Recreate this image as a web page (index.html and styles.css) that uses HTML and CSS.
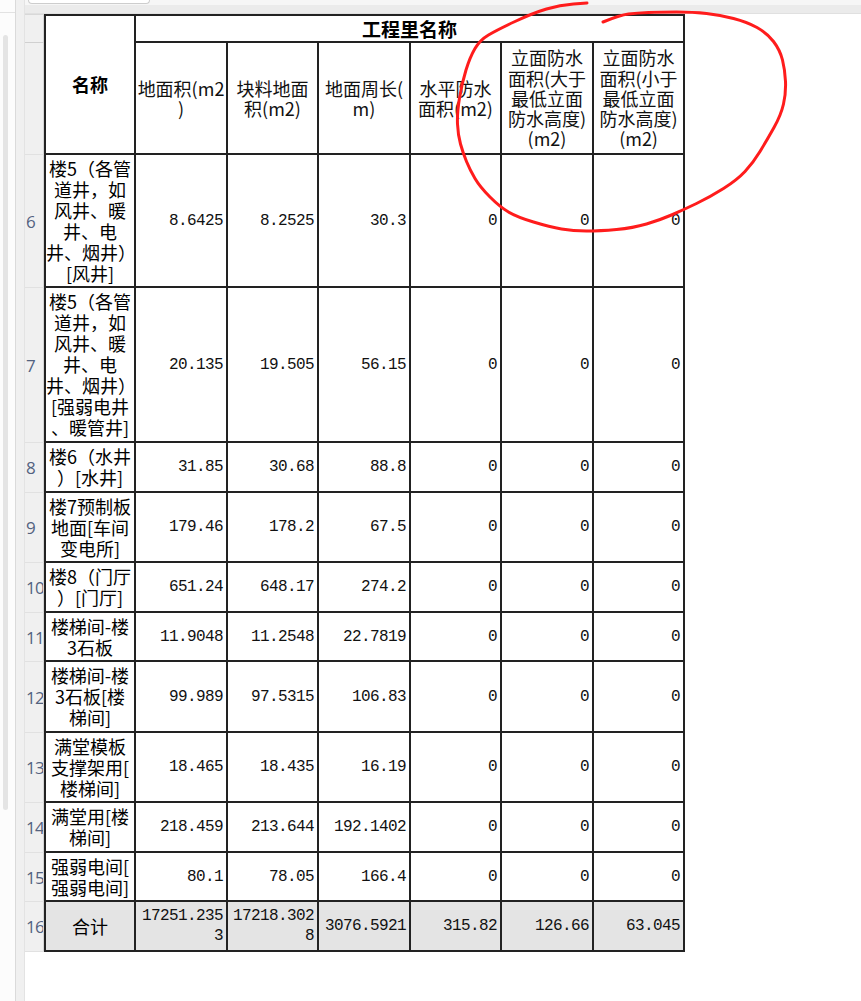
FILE: index.html
```html
<!DOCTYPE html>
<html lang="zh-CN">
<head>
<meta charset="utf-8">
<title>工程量表</title>
<link rel="stylesheet" href="styles.css">
</head>
<body>
<div class="app">
  <div class="side">
    <div class="side-top"></div>
    <div class="thumb"></div>
  </div>
  <div class="gutter"></div>
  <div class="main">
    <div class="topbar"><div class="searchbox"></div></div>
    <table class="grid">
      <colgroup>
        <col class="c-rn"><col class="c-92"><col class="c-92"><col class="c-91"><col class="c-92"><col class="c-91"><col class="c-92"><col class="c-91">
      </colgroup>
      <tr class="hd1">
        <td class="rn top"></td>
        <td class="nm top title" rowspan="2">名称</td>
        <td class="v top title group" colspan="6">工程里名称</td>
      </tr>
      <tr class="hd2">
        <td class="rn"></td>
        <td class="v hd">地面积(m2<br>)</td>
        <td class="v hd">块料地面<br>积(m2)</td>
        <td class="v hd">地面周长(<br>m)</td>
        <td class="v hd">水平防水<br>面积(m2)</td>
        <td class="v hd">立面防水<br>面积(大于<br>最低立面<br>防水高度)<br>(m2)</td>
        <td class="v hd">立面防水<br>面积(小于<br>最低立面<br>防水高度)<br>(m2)</td>
      </tr>
      <tr class="r6">
        <td class="rn">6</td>
        <td class="nm">楼5（各管<br>道井，如<br>风井、暖<br>井、电<br>井、烟井）<br>[风井]</td>
        <td class="v num">8.6425</td><td class="v num">8.2525</td><td class="v num">30.3</td><td class="v num">0</td><td class="v num">0</td><td class="v num">0</td>
      </tr>
      <tr class="r7">
        <td class="rn">7</td>
        <td class="nm">楼5（各管<br>道井，如<br>风井、暖<br>井、电<br>井、烟井）<br>[强弱电井<br>、暖管井]</td>
        <td class="v num">20.135</td><td class="v num">19.505</td><td class="v num">56.15</td><td class="v num">0</td><td class="v num">0</td><td class="v num">0</td>
      </tr>
      <tr class="r8">
        <td class="rn">8</td>
        <td class="nm">楼6（水井<br>）[水井]</td>
        <td class="v num">31.85</td><td class="v num">30.68</td><td class="v num">88.8</td><td class="v num">0</td><td class="v num">0</td><td class="v num">0</td>
      </tr>
      <tr class="r9">
        <td class="rn">9</td>
        <td class="nm">楼7预制板<br>地面[车间<br>变电所]</td>
        <td class="v num">179.46</td><td class="v num">178.2</td><td class="v num">67.5</td><td class="v num">0</td><td class="v num">0</td><td class="v num">0</td>
      </tr>
      <tr class="r10">
        <td class="rn">10</td>
        <td class="nm">楼8（门厅<br>）[门厅]</td>
        <td class="v num">651.24</td><td class="v num">648.17</td><td class="v num">274.2</td><td class="v num">0</td><td class="v num">0</td><td class="v num">0</td>
      </tr>
      <tr class="r11">
        <td class="rn">11</td>
        <td class="nm">楼梯间-楼<br>3石板</td>
        <td class="v num">11.9048</td><td class="v num">11.2548</td><td class="v num">22.7819</td><td class="v num">0</td><td class="v num">0</td><td class="v num">0</td>
      </tr>
      <tr class="r12">
        <td class="rn">12</td>
        <td class="nm">楼梯间-楼<br>3石板[楼<br>梯间]</td>
        <td class="v num">99.989</td><td class="v num">97.5315</td><td class="v num">106.83</td><td class="v num">0</td><td class="v num">0</td><td class="v num">0</td>
      </tr>
      <tr class="r13">
        <td class="rn">13</td>
        <td class="nm">满堂模板<br>支撑架用[<br>楼梯间]</td>
        <td class="v num">18.465</td><td class="v num">18.435</td><td class="v num">16.19</td><td class="v num">0</td><td class="v num">0</td><td class="v num">0</td>
      </tr>
      <tr class="r14">
        <td class="rn">14</td>
        <td class="nm">满堂用[楼<br>梯间]</td>
        <td class="v num">218.459</td><td class="v num">213.644</td><td class="v num">192.1402</td><td class="v num">0</td><td class="v num">0</td><td class="v num">0</td>
      </tr>
      <tr class="r15">
        <td class="rn">15</td>
        <td class="nm">强弱电间[<br>强弱电间]</td>
        <td class="v num">80.1</td><td class="v num">78.05</td><td class="v num">166.4</td><td class="v num">0</td><td class="v num">0</td><td class="v num">0</td>
      </tr>
      <tr class="r16 total">
        <td class="rn">16</td>
        <td class="nm">合计</td>
        <td class="v num">17251.235<br>3</td><td class="v num">17218.302<br>8</td><td class="v num">3076.5921</td><td class="v num">315.82</td><td class="v num">126.66</td><td class="v num">63.045</td>
      </tr>
    </table>
  </div>
  <svg class="annot" width="861" height="1001" viewBox="0 0 861 1001" aria-hidden="true">
    <path d="M603 22 Q620 15 628.5 14 Q637 13 648.5 12.5 Q660 12 676.5 12 Q693 12 706.5 13.5 Q720 15 733.5 18.5 Q747 22 757 27.5 Q767 33 773.5 41.5 Q780 50 782.5 60 Q785 70 785.5 81.5 Q786 93 783.5 104 Q781 115 774 127.5 Q767 140 760 151.5 Q753 163 745 171.5 Q737 180 723.5 188.5 Q710 197 696.5 203.5 Q683 210 671.5 215 Q660 220 646.5 224 Q633 228 616.5 229.5 Q600 231 586.5 231 Q573 231 561.5 229 Q550 227 533.5 222 Q517 217 508.5 212 Q500 207 490 197 Q480 187 475 178.5 Q470 170 466.5 161.5 Q463 153 460.5 144 Q458 135 457.5 124 Q457 113 459.5 98 Q462 83 466 70 Q470 57 475 48.5 Q480 40 488.5 35 Q497 30 515 21.5 Q533 13 546.5 9 Q560 5 573.5 4 L587 3"/>
  </svg>
</div>
</body>
</html>
```

FILE: styles.css
```css
html, body {
  margin: 0;
  padding: 0;
  background: #ffffff;
}

body {
  font-family: "Noto Sans CJK SC", "Noto Sans", sans-serif;
  font-size: 18px;
  color: #000;
}

.app {
  position: relative;
  display: flex;
  width: 861px;
  height: 1001px;
  overflow: hidden;
}

.side {
  flex: none;
  width: 15px;
  border-right: 1px solid #dadada;
  background: #fcfcfc;
  display: flex;
  flex-direction: column;
}

.side-top {
  height: 12px;
  border-bottom: 1px solid #e2e2e2;
}

.thumb {
  margin: 22px 0 0 3px;
  width: 5px;
  height: 775px;
  border-radius: 3px;
  background: #e4e4e4;
}

.gutter {
  flex: none;
  width: 8px;
  background: #f0f0f0;
  border-right: 1px solid #e3e3e3;
}

.main {
  flex: 1;
  display: flex;
  flex-direction: column;
  align-items: flex-start;
}

.topbar {
  flex: none;
  align-self: stretch;
  height: 14px;
  background: linear-gradient(#f6f6f6 0 5px, #ebebeb 5px 13px, #e0e0e0 13px);
}

.searchbox {
  margin-left: 3px;
  width: 120px;
  height: 3px;
  background: #ffffff;
  border: 1px solid #cdcdcd;
  border-top: 0;
  border-radius: 0 0 4px 4px;
}

.grid {
  border-collapse: separate;
  border-spacing: 0;
  table-layout: fixed;
  width: 660px;
}

.c-rn { width: 19px; }
.c-92 { width: 92px; }
.c-91 { width: 91px; }

.grid td {
  padding: 0;
  vertical-align: middle;
  white-space: nowrap;
  overflow: hidden;
}

.rn {
  background: #f0f0f0;
  border-right: 1px solid #d4d4d4;
  border-bottom: 1px solid #e1e1e1;
  padding-left: 1px !important;
  text-align: left;
  font-family: "Open Sans", "Noto Sans", sans-serif;
  font-size: 17px;
  letter-spacing: -0.8px;
  color: #53627f;
}

.rn.top {
  border-top: 1px solid #d8d8d8;
  border-bottom-color: #d0d0d0;
}

.nm {
  border-left: 2px solid #222;
  border-right: 2px solid #222;
  border-bottom: 2px solid #222;
  text-align: center;
  line-height: 21px;
  background: #fff;
}

.v {
  border-right: 2px solid #222;
  border-bottom: 2px solid #222;
  background: #fff;
}

.top.nm, .top.v {
  border-top: 2px solid #222;
}

.title {
  font-weight: bold;
  text-align: center;
  font-size: 18px;
}

.group {
  font-size: 19px;
  line-height: 24px;
}

.hd {
  text-align: center;
  line-height: 20.3px;
  color: #111;
}

.num {
  text-align: right;
  padding-right: 3px !important;
  font-family: "Liberation Mono", "DejaVu Sans Mono", monospace;
  font-size: 16px;
  letter-spacing: -0.6px;
  line-height: 20px;
  color: #111;
}

.total .nm,
.total .v {
  background: #e4e4e4;
}

.hd1 { height: 29px; }
.hd2 { height: 112px; }
.r6 { height: 133px; }
.r7 { height: 155px; }
.r8 { height: 50px; }
.r9 { height: 70px; }
.r10 { height: 50px; }
.r11 { height: 49px; }
.r12 { height: 71px; }
.r13 { height: 70px; }
.r14 { height: 50px; }
.r15 { height: 49px; }
.r16 { height: 50px; }

.annot {
  position: absolute;
  left: 0;
  top: 0;
  pointer-events: none;
}

.annot path {
  fill: none;
  stroke: #ff1c1c;
  stroke-width: 3;
  stroke-linecap: round;
  stroke-linejoin: round;
}
```
